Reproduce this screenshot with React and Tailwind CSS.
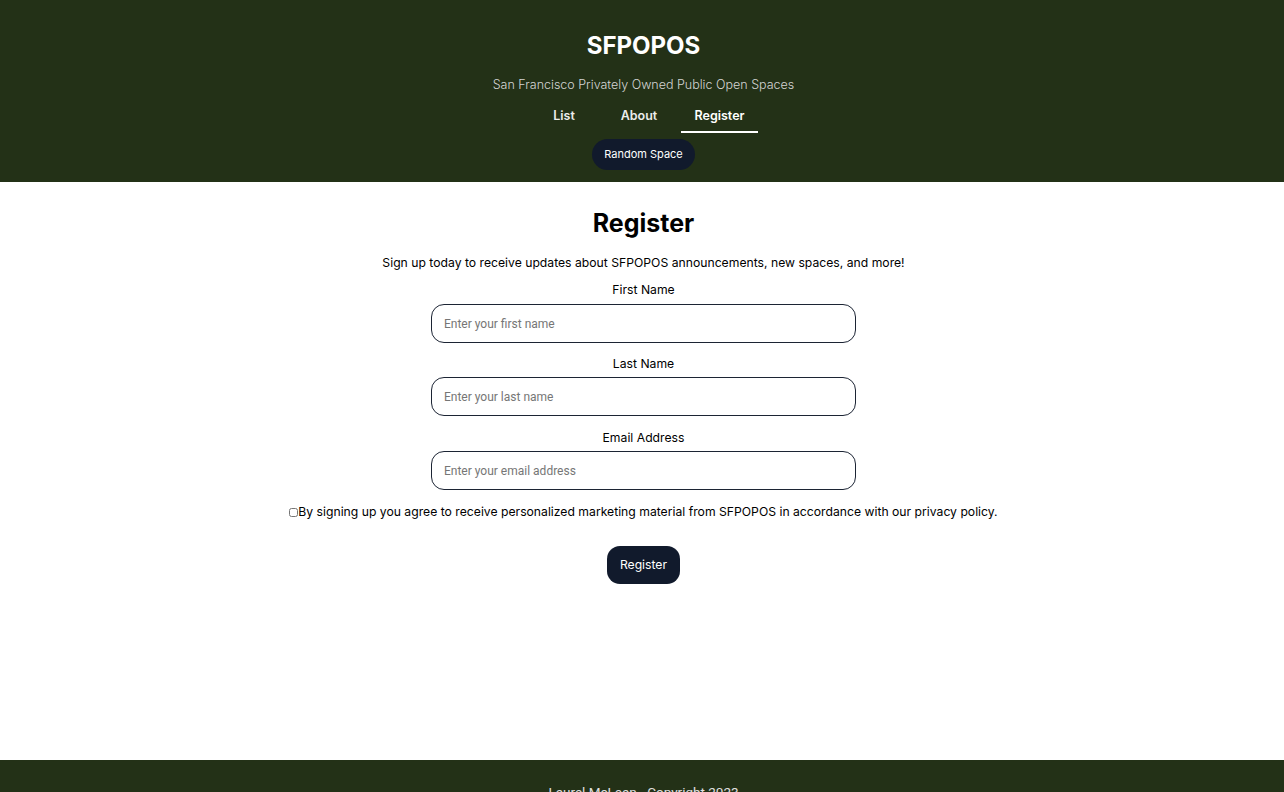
export default function App() {
  const inter = { fontFamily: "Inter, 'Noto Sans', sans-serif" };
  const inputCls = "w-[425px] h-[39px] rounded-[13px] border border-[#1c2434] px-[12px] text-[12px] placeholder:text-[#767676] outline-none";
  return (
    <div className="min-h-screen flex flex-col bg-white text-black" style={inter}>
      <header className="bg-[#233117] flex flex-col items-center pt-[31px] pl-[3px] h-[182px]">
        <h1 className="text-[24px] leading-[30px] font-bold text-white">SFPOPOS</h1>
        <p className="mt-[16px] text-[12.5px] leading-[16px] text-[#d4d4d4] font-light">San Francisco Privately Owned Public Open Spaces</p>
        <nav className="mt-[13px] flex items-start text-[12.5px] font-semibold text-[#ececec]">
          <a className="w-[66px] text-center pb-[6px] pt-[1px] pl-[4px]">List</a>
          <a className="w-[86px] text-center pb-[6px] pt-[1px] pl-[2px]">About</a>
          <a className="w-[77px] text-center pb-[5px] pt-[1px] text-white border-b-2 border-white">Register</a>
        </nav>
        <button className="mt-[6px] h-[31px] px-[12px] rounded-full bg-[#111a2c] text-white text-[11px]">Random Space</button>
      </header>
      <main className="flex flex-col items-center pl-[3px] h-[578px]">
        <h2 className="pt-[26px] text-[25px] leading-[30px] font-bold">Register</h2>
        <p className="mt-[17px] text-[12.2px] leading-[16px]">Sign up today to receive updates about SFPOPOS announcements, new spaces, and more!</p>
        <form className="flex flex-col items-center">
          <label className="mt-[11px] text-[12.2px] leading-[16px]">First Name</label>
          <input className={"mt-[6px] " + inputCls} placeholder="Enter your first name" style={{ fontFamily: "Roboto, sans-serif" }} />
          <label className="mt-[13px] text-[12.2px] leading-[16px]">Last Name</label>
          <input className={"mt-[5px] " + inputCls} placeholder="Enter your last name" style={{ fontFamily: "Roboto, sans-serif" }} />
          <label className="mt-[14px] text-[12.2px] leading-[16px]">Email Address</label>
          <input className={"mt-[5px] " + inputCls} placeholder="Enter your email address" style={{ fontFamily: "Roboto, sans-serif" }} />
          <div className="mt-[14px] flex items-center text-[12.2px] leading-[16px]">
            <input type="checkbox" className="w-[9px] h-[9px] m-0" />
            <span>By signing up you agree to receive personalized marketing material from SFPOPOS in accordance with our privacy policy.</span>
          </div>
          <button type="button" className="mt-[26px] w-[73px] h-[38px] rounded-[13px] bg-[#111a2c] text-white text-[12.2px]">Register</button>
        </form>
      </main>
      <footer className="bg-[#233117] flex flex-col items-center pt-[24px] pb-[24px] pl-[3px]">
        <p className="text-[13.5px] leading-[16px] text-[#e0e0e0]" style={{ fontFamily: "Roboto, sans-serif" }}>Laurel McLean - Copyright 2023</p>
      </footer>
    </div>
  );
}
